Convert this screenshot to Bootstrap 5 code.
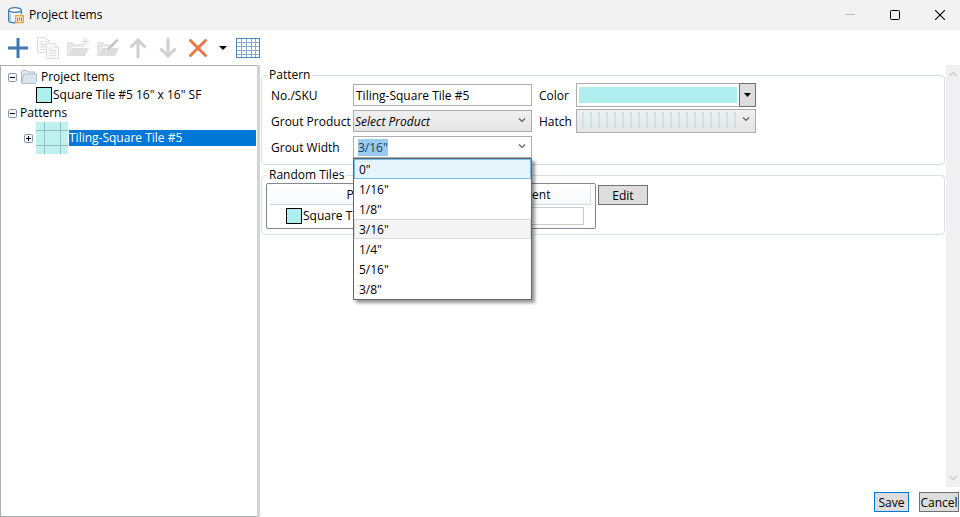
<!DOCTYPE html>
<html lang="en">
<head>
<meta charset="utf-8">
<meta name="viewport" content="width=device-width, initial-scale=1">
<title>Project Items</title>
<link href="https://cdn.jsdelivr.net/npm/bootstrap@5.3.0/dist/css/bootstrap.min.css" rel="stylesheet">
<style>
  body { font-family: "Open Sans", "Noto Sans", sans-serif; font-size: 12px; line-height: 16px; color: #000; background: #fff; }
  button, input, select { font: inherit; color: inherit; }
  svg { display: block; flex: none; }

  .titlebar { height: 30px; background: #f2f2f2; padding-left: 8px; gap: 5px; }
  .win-btn { width: 40px; height: 30px; border: 0; background: none; padding: 0; display: flex; align-items: center; justify-content: center; }
  .toolbar { height: 35px; padding-left: 3px; }
  .tool { width: 30px; height: 30px; border: 0; background: none; padding: 0; display: flex; align-items: center; justify-content: center; }
  .tool.slim { width: 20px; }

  .tree-pane { width: 257px; flex: none; border: 1px solid #abadb3; border-right: 0; padding: 2px 1px 0 0; }
  .splitter { width: 3px; flex: none; background: #d3d3d3; }
  .tree-row { display: flex; align-items: center; min-height: 18px; padding-left: 7px; gap: 3px; }
  .tree-row.root { gap: 4px; }
  .tree-row.item { padding-left: 35px; gap: 1px; }
  .tree-row.pattern { padding-left: 23px; }
  .expander { width: 9px; height: 9px; padding: 0; border: 0; background: none; flex: none; }
  .swatch { width: 16px; height: 16px; background: #afeeee; border: 1px solid #000; flex: none; }
  .picked { background: #0078d7; color: #fff; }

  .content { padding-top: 2px; }
  .scroller { width: 14px; flex: none; background: #f0f0f0; padding: 6px 0; }
  .scroller button { border: 0; background: none; padding: 0; }
  .group { border: 1px solid #d5dfe5; border-radius: 4px; margin: 0 1px 2px; padding: 0 0 5px 4px; min-width: 0; }
  .group > legend { float: none; width: auto; margin: 0 0 0 1px; padding: 0 2px; font-size: 12px; line-height: 16px; }
  .fields { display: grid; grid-template-columns: 82px 179px 44px 180px; grid-auto-rows: 24px; row-gap: 2px; align-items: center; padding-left: 5px; }
  .fields label { padding-top: 2px; }
  .second { padding-left: 7px; }
  .box { display: block; height: 22px; width: 100%; border: 1px solid #abadb3; border-radius: 0; background: #fff; padding: 0 2px; outline: 0; }
  .pick { appearance: none; border-color: #acacac; background: linear-gradient(#f0f0f0, #e5e5e5); padding: 2px 0 0 1px; }
  .pick.hatch { height: 24px; background: repeating-linear-gradient(90deg, #bceaea 0 2px, transparent 2px 8px) 5px 2px / 154px 16px no-repeat, linear-gradient(#f0f0f0, #e5e5e5); }
  .chev { position: absolute; right: 6px; top: 8px; pointer-events: none; }
  .width-input { padding: 0 4px; }
  .width-input::selection { background: rgba(153, 201, 239, .99); color: #1a3a5a; }
  .options { position: absolute; top: 22px; left: 0; right: 0; z-index: 5; margin: 0; padding: 0; list-style: none; background: #fff; border: 1px solid #646464; box-shadow: 3px 3px 3px rgba(0, 0, 0, .4); }
  .options li { height: 20px; padding: 2px 4px 0; border: 1px solid transparent; }
  .options .hot { background: #e5f3fb; border-color: #70c0e7; }
  .options .current { background: #f5f5f5; border-color: #dadada; }
  .color-btn { height: 24px; width: 100%; border: 1px solid #acacac; background: #fff; padding: 0; display: flex; }
  .color-fill { flex: 1; margin: 3px 2px; background: #afeeee; }
  .color-arrow { width: 17px; margin: -1px -1px -1px 0; border: 1px solid #707070; background: #ddd; display: flex; align-items: center; justify-content: center; }

  .tile-box { width: 330px; border: 1px solid #828790; border-radius: 2px; padding: 1px 4px 2px 3px; }
  .tile-table { width: 100%; table-layout: fixed; border-collapse: separate; border-spacing: 0; }
  .tile-table th { height: 20px; padding: 0; font-weight: 400; text-align: center; background: linear-gradient(#fff, #f7f8fa); border-right: 1px solid #dedfe1; border-bottom: 1px solid #d5d5d5; }
  .tile-table td { padding: 2px 0 1px; }
  .tile-name { display: flex; align-items: center; gap: 1px; white-space: nowrap; overflow: hidden; }
  .name-col { width: 198px; }
  .percent-input { height: 18px; width: 116px; border-color: #ccc; }
  .push { border: 1px solid #707070; background: #ddd; height: 20px; line-height: 16px; padding: 1px 0 0; white-space: nowrap; }
  .push.edit { width: 50px; margin: 2px 0 0 2px; }
  .push.save { width: 35px; border-color: #0078d7; }
  .push.cancel { width: 40px; }
  .actions { height: 30px; gap: 10px; padding-right: 1px; }
</style>
</head>
<body class="vh-100 d-flex flex-column overflow-hidden">
<header class="titlebar d-flex align-items-center">
  <svg width="16" height="17" viewBox="0 0 16 17" fill="none">
    <path d="M.7 3v10.500C.7 15 4 15.800 7.500 15.800M13.300 3v4" stroke="#3c78b0" stroke-width="1.300"/>
    <ellipse cx="7" cy="3" rx="6.300" ry="2.300" fill="#fff" stroke="#3c78b0" stroke-width="1.200"/>
    <path d="M2.500 7v6" stroke="#a9c6df"/>
    <rect x="7.600" y="8.600" width="7.800" height="7" fill="#f4e3c8" stroke="#eaa140" stroke-width="1.200"/>
    <path d="M9.500 10.500v4M11.500 10.500v3M13.500 10.500v4" stroke="#888"/>
  </svg>
  <span class="flex-grow-1">Project Items</span>
  <button class="win-btn" aria-label="Minimize" disabled><svg width="10" height="10"><path d="M0 4.500h10" stroke="#bbb"/></svg></button>
  <button class="win-btn" aria-label="Maximize"><svg width="10" height="10"><rect x=".5" y=".5" width="9" height="9" rx="1" fill="none" stroke="#000"/></svg></button>
  <button class="win-btn" aria-label="Close"><svg width="10" height="10"><path d="M0 0l10 10M10 0L0 10" stroke="#000" stroke-width="1.100"/></svg></button>
</header>

<nav class="toolbar d-flex align-items-center" aria-label="Tools">
  <button class="tool" aria-label="Add"><svg width="20" height="20"><path d="M10 0v20M0 10h20" stroke="#3f7ab5" stroke-width="3"/></svg></button>
  <button class="tool" aria-label="Copy" disabled><svg width="22" height="22" fill="#fafafa" stroke="#dedede"><path d="M.5.5h8l4 4v11h-12zM8.500.5v4h4M3 5h4M3 7.500h7M3 10h7M3 12.500h6"/><path d="M9.500 6.500h8l4 4v11h-12zM17.500 6.500v4h4M12 11h4M12 13.500h7M12 16h7M12 18.500h7"/></svg></button>
  <button class="tool" aria-label="New folder" disabled><svg width="23" height="22"><path d="M0 19V5h6l2 2h9v3H5L1 19z" fill="#e6e6e6"/><path d="M5 11h17l-4 8H1z" fill="#dedede"/><path d="M18 0v9M13.500 4.500h9M15 1.500l6 6M21 1.500l-6 6" stroke="#dcdcdc"/></svg></button>
  <button class="tool" aria-label="Edit folder" disabled><svg width="23" height="22"><path d="M0 19V5h6l2 2h9v3H5L1 19z" fill="#e6e6e6"/><path d="M5 11h17l-4 8H1z" fill="#dedede"/><path d="M9 15l1-4L20 1.500l2 2L12.500 13z" fill="#c4c4c4" stroke="#fff" stroke-width=".5"/></svg></button>
  <button class="tool" aria-label="Move up" disabled><svg width="18" height="20" fill="none" stroke="#d0d0d0" stroke-width="3"><path d="M9 20V2M1.500 9.500L9 2l7.500 7.500"/></svg></button>
  <button class="tool" aria-label="Move down" disabled><svg width="18" height="20" fill="none" stroke="#d0d0d0" stroke-width="3"><path d="M9 0v18M1.500 10.500L9 18l7.500-7.500"/></svg></button>
  <button class="tool" aria-label="Delete"><svg width="18" height="18"><path d="M1.500 1.500l15 15M16.500 1.500l-15 15" stroke="#e8794a" stroke-width="3" stroke-linecap="round"/></svg></button>
  <button class="tool slim" aria-label="Delete options"><svg width="8" height="4"><path d="M0 0h8L4 4z"/></svg></button>
  <button class="tool" aria-label="Table"><svg width="24" height="20" fill="none" stroke="#85aed6"><path d="M5.500 0v20M10.500 0v20M15.500 0v20M19.500 0v20M0 4.500h24M0 8.500h24M0 12.500h24M0 16.500h24"/><rect x=".5" y=".5" width="23" height="19" stroke="#4a86c0"/></svg></button>
</nav>

<div class="d-flex flex-grow-1">
  <aside class="tree-pane" aria-label="Items">
    <ul class="list-unstyled m-0">
      <li>
        <div class="tree-row root">
          <button class="expander" aria-label="Collapse Project Items"><svg width="9" height="9"><rect x=".5" y=".5" width="8" height="8" rx="1" fill="#f2f5f8" stroke="#8296ad"/><path d="M2 4.500h5" stroke="#000"/></svg></button>
          <svg width="16" height="14" viewBox="0 0 16 14"><path d="M.5 12.500V2l1-1.500h4L7 2h6.500v2" fill="#e6edf3" stroke="#a9b8c5"/><path d="M2.500 4h13v7.500l-1.500 2H.8z" fill="#dbe5ee" stroke="#b1bfcb"/></svg>
          <span>Project Items</span>
        </div>
        <ul class="list-unstyled m-0">
          <li class="tree-row item"><span class="swatch"></span><span>Square Tile #5 16" x 16" SF</span></li>
        </ul>
      </li>
      <li>
        <div class="tree-row">
          <button class="expander" aria-label="Collapse Patterns"><svg width="9" height="9"><rect x=".5" y=".5" width="8" height="8" rx="1" fill="#f2f5f8" stroke="#8296ad"/><path d="M2 4.500h5" stroke="#000"/></svg></button>
          <span>Patterns</span>
        </div>
        <ul class="list-unstyled m-0">
          <li class="tree-row pattern">
            <button class="expander" aria-label="Expand Tiling-Square Tile #5"><svg width="9" height="9"><rect x=".5" y=".5" width="8" height="8" rx="1" fill="#f2f5f8" stroke="#8296ad"/><path d="M2 4.500h5M4.500 2v5" stroke="#000"/></svg></button>
            <span class="d-flex align-items-center flex-grow-1">
              <svg width="33" height="32"><path d="M0 0h32v32H0z" fill="#bff1f1"/><path d="M8.500 0v32M24.500 0v32M0 8.500h32M0 23.500h32" stroke="#98bcbc"/></svg>
              <span class="picked flex-grow-1">Tiling-Square Tile #5</span>
            </span>
          </li>
        </ul>
      </li>
    </ul>
  </aside>
  <div class="splitter"></div>

  <div class="flex-grow-1 d-flex flex-column">
    <div class="d-flex flex-grow-1">
      <main class="content flex-grow-1">
        <fieldset class="group">
          <legend>Pattern</legend>
          <div class="fields">
            <label for="sku">No./SKU</label>
            <input class="box" id="sku" type="text" value="Tiling-Square Tile #5">
            <label class="second" for="color">Color</label>
            <button class="color-btn" id="color" type="button"><span class="color-fill"></span><span class="color-arrow"><svg width="7" height="4"><path d="M0 0h7L3.500 4z"/></svg></span></button>

            <label for="product">Grout Product</label>
            <div class="position-relative">
              <select class="box pick fst-italic" id="product"><option>Select Product</option></select>
              <svg class="chev" width="8" height="5" fill="none" stroke="#606060" stroke-width="1.200"><path d="M1 .5l3 3 3-3"/></svg>
            </div>
            <label class="second" for="hatch">Hatch</label>
            <div class="position-relative">
              <select class="box pick hatch" id="hatch"><option label=" " value="vertical"></option></select>
              <svg class="chev" width="8" height="5" fill="none" stroke="#606060" stroke-width="1.200"><path d="M1 .5l3 3 3-3"/></svg>
            </div>

            <label for="width">Grout Width</label>
            <div class="position-relative">
              <input class="box width-input" id="width" type="text" role="combobox" aria-expanded="true" aria-controls="width-list" value='3/16"'>
              <svg class="chev" width="8" height="5" fill="none" stroke="#606060" stroke-width="1.200"><path d="M1 .5l3 3 3-3"/></svg>
              <ul class="options" id="width-list" role="listbox">
                <li class="hot" role="option">0"</li>
                <li role="option">1/16"</li>
                <li role="option">1/8"</li>
                <li class="current" role="option" aria-selected="true">3/16"</li>
                <li role="option">1/4"</li>
                <li role="option">5/16"</li>
                <li role="option">3/8"</li>
              </ul>
            </div>
          </div>
        </fieldset>

        <fieldset class="group">
          <legend>Random Tiles</legend>
          <div class="d-flex align-items-start">
            <div class="tile-box">
              <table class="tile-table">
                <thead><tr><th class="name-col" scope="col">Product</th><th scope="col">Percent</th></tr></thead>
                <tbody><tr>
                  <td><div class="tile-name ps-3"><span class="swatch"></span>Square Tile #5 16" x 16" SF</div></td>
                  <td><input class="box percent-input" type="text" aria-label="Percent"></td>
                </tr></tbody>
              </table>
            </div>
            <button class="push edit" type="button">Edit</button>
          </div>
        </fieldset>
      </main>
      <div class="scroller d-flex flex-column justify-content-between align-items-center">
        <button aria-label="Scroll up"><svg width="8" height="6" fill="none" stroke="#cdcdcd" stroke-width="1.500"><path d="M.5 5L4 1.500 7.500 5"/></svg></button>
        <button aria-label="Scroll down"><svg width="8" height="6" fill="none" stroke="#cdcdcd" stroke-width="1.500"><path d="M.5 1L4 4.500 7.500 1"/></svg></button>
      </div>
    </div>
    <footer class="actions d-flex align-items-center justify-content-end">
      <button class="push save" type="button">Save</button>
      <button class="push cancel" type="button">Cancel</button>
    </footer>
  </div>
</div>
<script src="https://cdn.jsdelivr.net/npm/bootstrap@5.3.0/dist/js/bootstrap.bundle.min.js"></script>
<script>
  const widthInput = document.getElementById('width');
  widthInput.focus();
  widthInput.select();
</script>
</body>
</html>
